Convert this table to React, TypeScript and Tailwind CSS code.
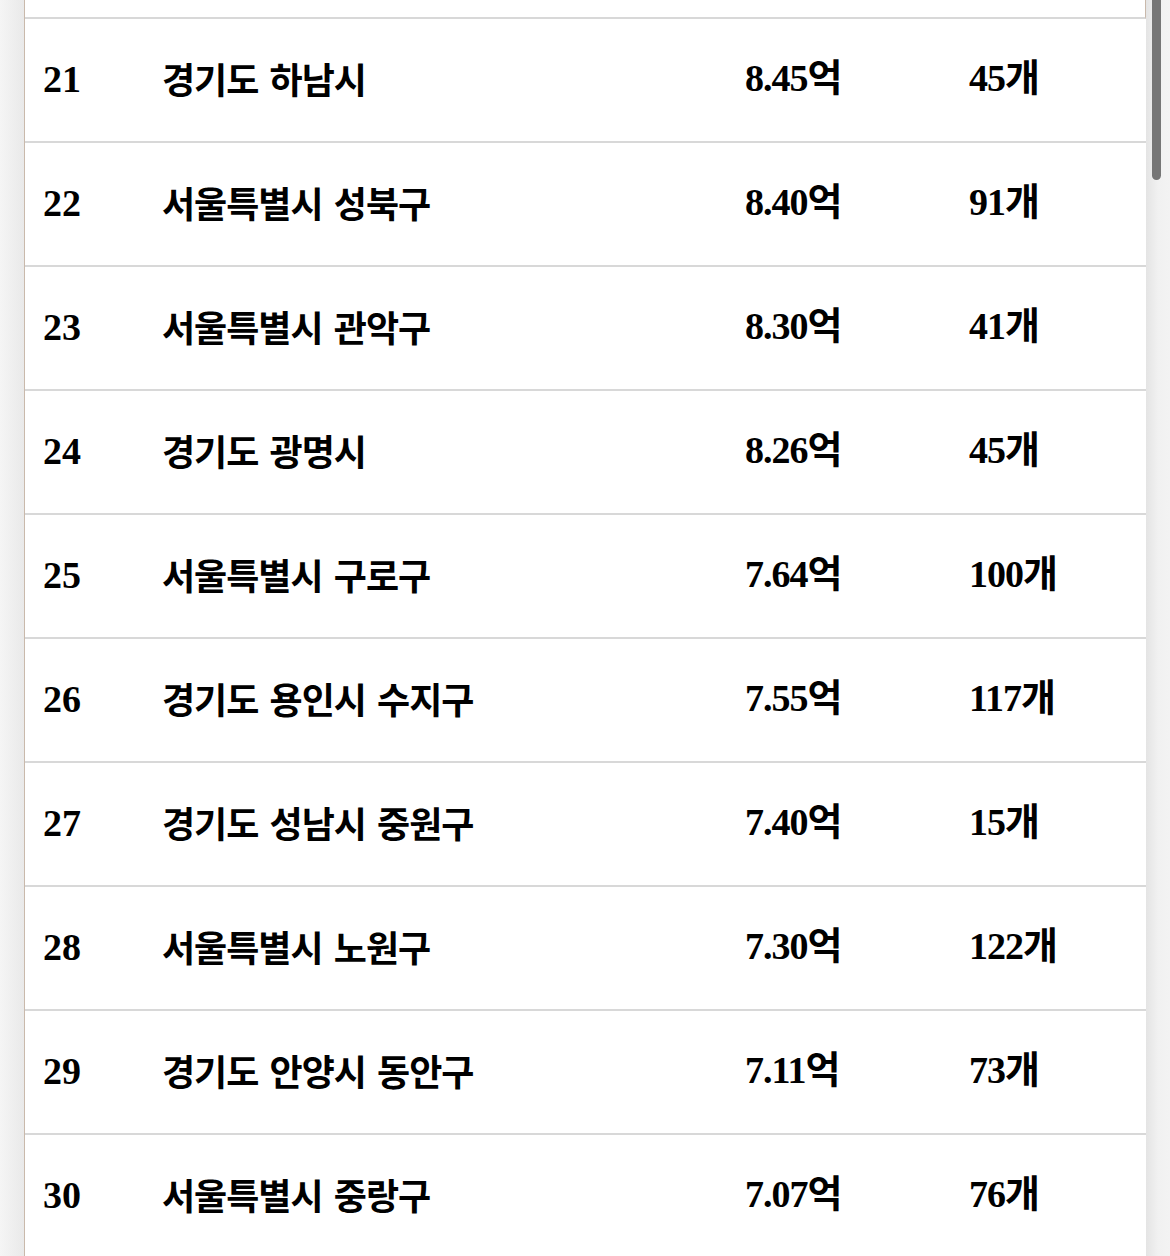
const rows = [
  { rank: 21, name: "경기도 하남시", price: "8.45억", count: "45개" },
  { rank: 22, name: "서울특별시 성북구", price: "8.40억", count: "91개" },
  { rank: 23, name: "서울특별시 관악구", price: "8.30억", count: "41개" },
  { rank: 24, name: "경기도 광명시", price: "8.26억", count: "45개" },
  { rank: 25, name: "서울특별시 구로구", price: "7.64억", count: "100개" },
  { rank: 26, name: "경기도 용인시 수지구", price: "7.55억", count: "117개" },
  { rank: 27, name: "경기도 성남시 중원구", price: "7.40억", count: "15개" },
  { rank: 28, name: "서울특별시 노원구", price: "7.30억", count: "122개" },
  { rank: 29, name: "경기도 안양시 동안구", price: "7.11억", count: "73개" },
  { rank: 30, name: "서울특별시 중랑구", price: "7.07억", count: "76개" },
];

export default function App() {
  return (
    <div className="flex h-[1256px] w-full overflow-hidden bg-[#f3f3f3] [font-family:'Liberation_Serif','Noto_Sans_CJK_KR',serif]">
      {/* left gutter */}
      <div className="w-[24px] flex-none bg-gradient-to-r from-[#f5f5f5] to-[#e9e9e9]" />

      {/* table */}
      <div className="flex min-w-0 flex-1 flex-col border-l-[1.5px] border-[#c9b9ab] bg-white">
        <div className="h-[19px] flex-none border-b-2 border-r-[1.5px] border-b-[#d8d8d8] border-r-[#c9b9ab]" />
        {rows.map((r) => (
          <div
            key={r.rank}
            className="grid h-[124px] flex-none grid-cols-[119px_583px_224px_1fr] items-center border-b-2 border-[#d8d8d8] pb-[4px] pl-[18px] text-[38px] font-bold text-black"
          >
            <div className="pt-[2px]">{r.rank}</div>
            <div className="text-[36px] tracking-[-1px] [word-spacing:4px] [font-family:'Noto_Sans_CJK_KR',sans-serif]">{r.name}</div>
            <div className="tracking-[-1px]">{r.price}</div>
            <div className="tracking-[-1px]">{r.count}</div>
          </div>
        ))}
      </div>

      {/* scrollbar */}
      <div className="relative w-[24px] flex-none bg-gradient-to-r from-[#e4e4e4] via-[#f1f1f1] to-[#f3f3f3]">
        <div className="absolute left-[6px] top-0 h-[180px] w-[9px] rounded-b-full bg-[#767676]" />
      </div>
    </div>
  );
}
